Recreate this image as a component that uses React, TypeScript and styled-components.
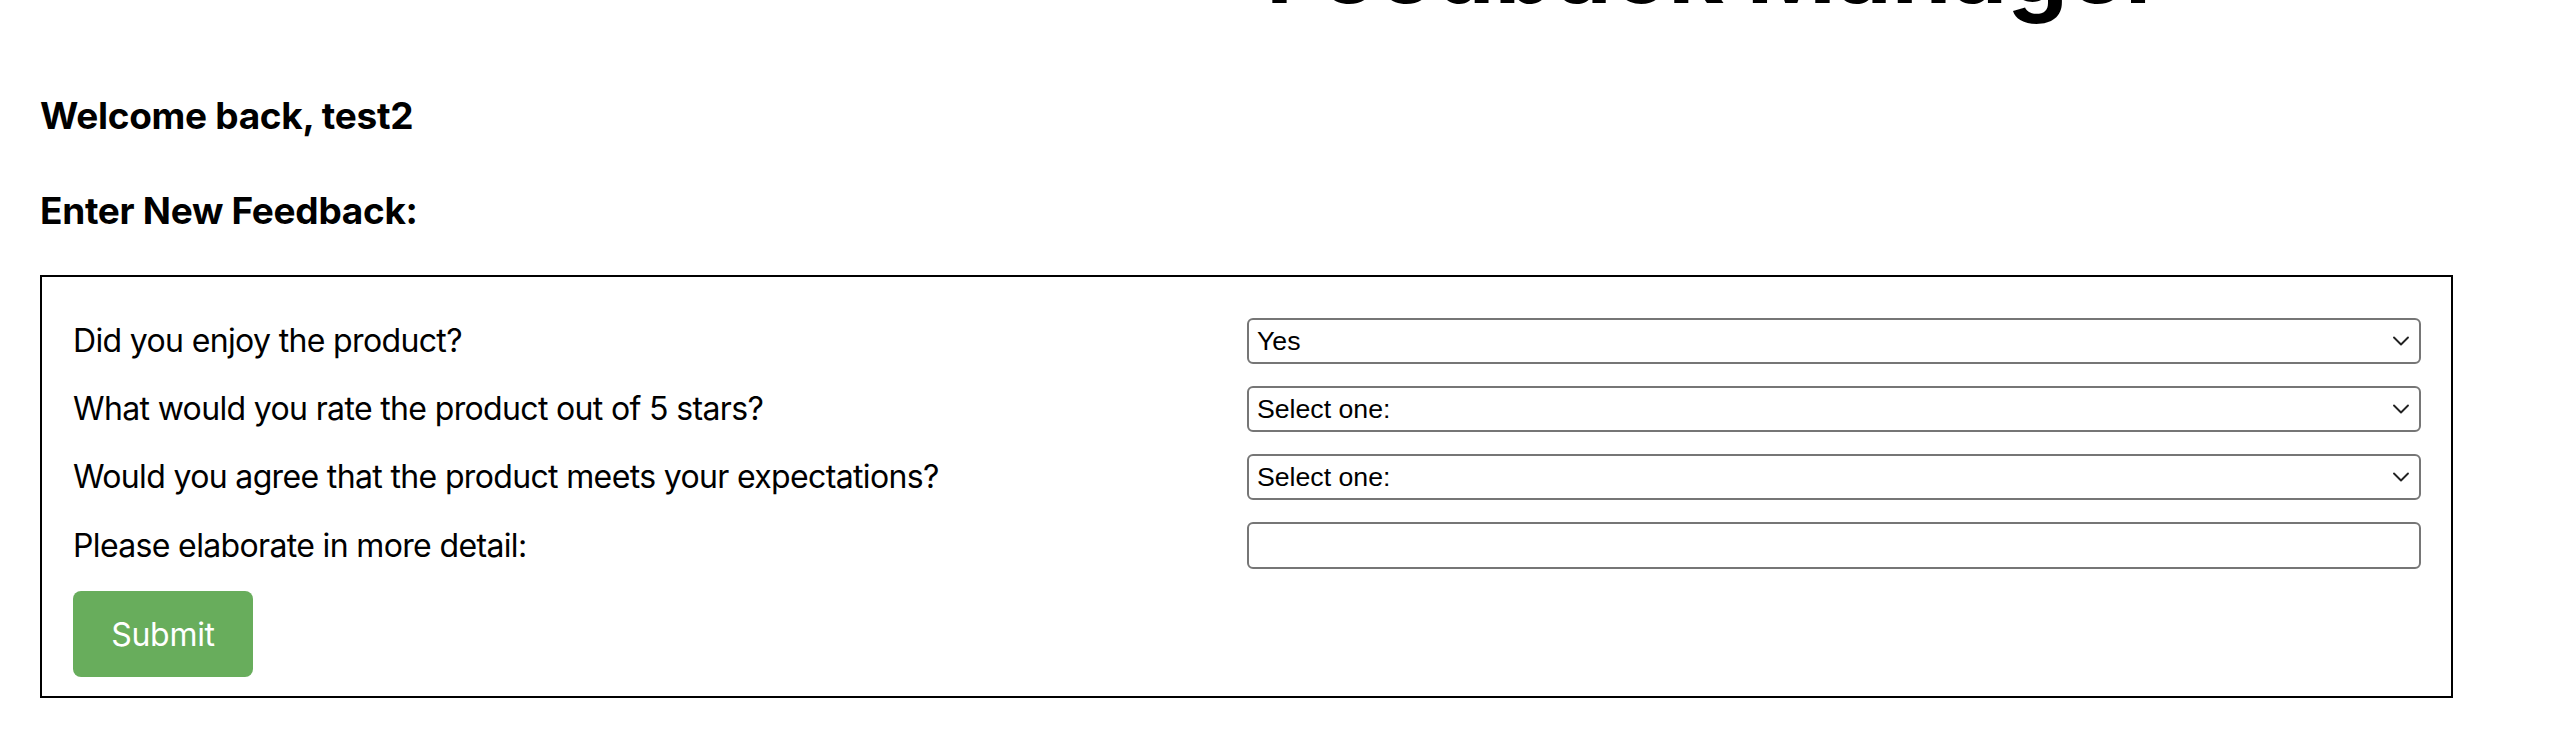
import React from "react";
import styled, { createGlobalStyle } from "styled-components";

const GlobalStyle = createGlobalStyle`
  html, body {
    margin: 0;
    padding: 0;
    background: #ffffff;
    overflow: hidden;
  }
  body {
    font-family: Inter, "Noto Sans", "Liberation Sans", sans-serif;
    color: #000000;
  }
  *, *::before, *::after {
    box-sizing: border-box;
  }
`;

const Page = styled.main`
  display: flex;
  flex-direction: column;
  align-items: flex-start;
  padding-left: 40px;
`;

const Header = styled.header`
  display: flex;
  justify-content: flex-start;
  width: 100%;
  padding-left: 1226px;
  margin-top: -87px;
`;

const Title = styled.h1`
  margin: 0;
  font-size: 96px;
  line-height: 1.15;
  font-weight: 700;
  white-space: nowrap;
`;

const Heading = styled.h3<{ $top: number }>`
  margin: ${(p) => p.$top}px 0 0 0;
  font-size: 37px;
  line-height: 45px;
  font-weight: 700;
  letter-spacing: -0.3px;
`;

const FormBox = styled.form`
  margin-top: 42px;
  width: 2413px;
  border: 2px solid #000000;
  padding: 41px 30px 19px 31px;
  display: flex;
  flex-direction: column;
  gap: 22px;
`;

const Row = styled.div`
  display: grid;
  grid-template-columns: 1fr 1fr;
  align-items: center;
`;

const Label = styled.label`
  font-size: 32px;
  line-height: 46px;
  font-weight: 400;
  letter-spacing: -0.65px;
`;

const SelectWrap = styled.div`
  position: relative;
  width: 100%;
`;

const Select = styled.select`
  appearance: none;
  -webkit-appearance: none;
  width: 100%;
  height: 46px;
  border: 2px solid #767676;
  border-radius: 6px;
  background: #ffffff;
  padding: 0 40px 0 8px;
  font-family: "Liberation Sans", Arial, sans-serif;
  font-size: 26.67px;
  color: #000000;
  outline: none;
`;

const Chevron = styled.svg`
  position: absolute;
  right: 11px;
  top: 50%;
  width: 18px;
  height: 11px;
  transform: translateY(-50%);
  pointer-events: none;
`;

const TextInput = styled.input`
  width: 100%;
  height: 47px;
  border: 2px solid #767676;
  border-radius: 6px;
  background: #ffffff;
  padding: 0 8px;
  font-family: "Liberation Sans", Arial, sans-serif;
  font-size: 26.67px;
  outline: none;
`;

const SubmitButton = styled.button`
  align-self: flex-start;
  width: 180px;
  height: 86px;
  border: none;
  border-radius: 8px;
  background: #68ad5c;
  color: #ffffff;
  font-family: Inter, "Noto Sans", sans-serif;
  font-size: 32px;
  font-weight: 400;
  letter-spacing: -0.3px;
  cursor: pointer;
`;

type Question = {
  label: string;
  options: string[];
  value: string;
};

const questions: Question[] = [
  {
    label: "Did you enjoy the product?",
    options: ["Select one:", "Yes", "No"],
    value: "Yes",
  },
  {
    label: "What would you rate the product out of 5 stars?",
    options: ["Select one:", "1", "2", "3", "4", "5"],
    value: "Select one:",
  },
  {
    label: "Would you agree that the product meets your expectations?",
    options: ["Select one:", "Strongly agree", "Agree", "Neutral", "Disagree", "Strongly disagree"],
    value: "Select one:",
  },
];

const ChevronIcon = () => (
  <Chevron viewBox="0 0 18 11" fill="none">
    <path d="M2 2 L9 9 L16 2" stroke="#222222" strokeWidth="1.9" strokeLinecap="round" strokeLinejoin="round" />
  </Chevron>
);

export default function App() {
  return (
    <>
      <GlobalStyle />
      <Page>
        <Header>
          <Title>Feedback Manager</Title>
        </Header>
        <Heading $top={70}>Welcome back, test2</Heading>
        <Heading $top={50}>Enter New Feedback:</Heading>
        <FormBox onSubmit={(e) => e.preventDefault()}>
          {questions.map((q) => (
            <Row key={q.label}>
              <Label>{q.label}</Label>
              <SelectWrap>
                <Select defaultValue={q.value}>
                  {q.options.map((o) => (
                    <option key={o} value={o}>
                      {o}
                    </option>
                  ))}
                </Select>
                <ChevronIcon />
              </SelectWrap>
            </Row>
          ))}
          <Row>
            <Label>Please elaborate in more detail:</Label>
            <TextInput type="text" />
          </Row>
          <SubmitButton type="submit">Submit</SubmitButton>
        </FormBox>
      </Page>
    </>
  );
}
